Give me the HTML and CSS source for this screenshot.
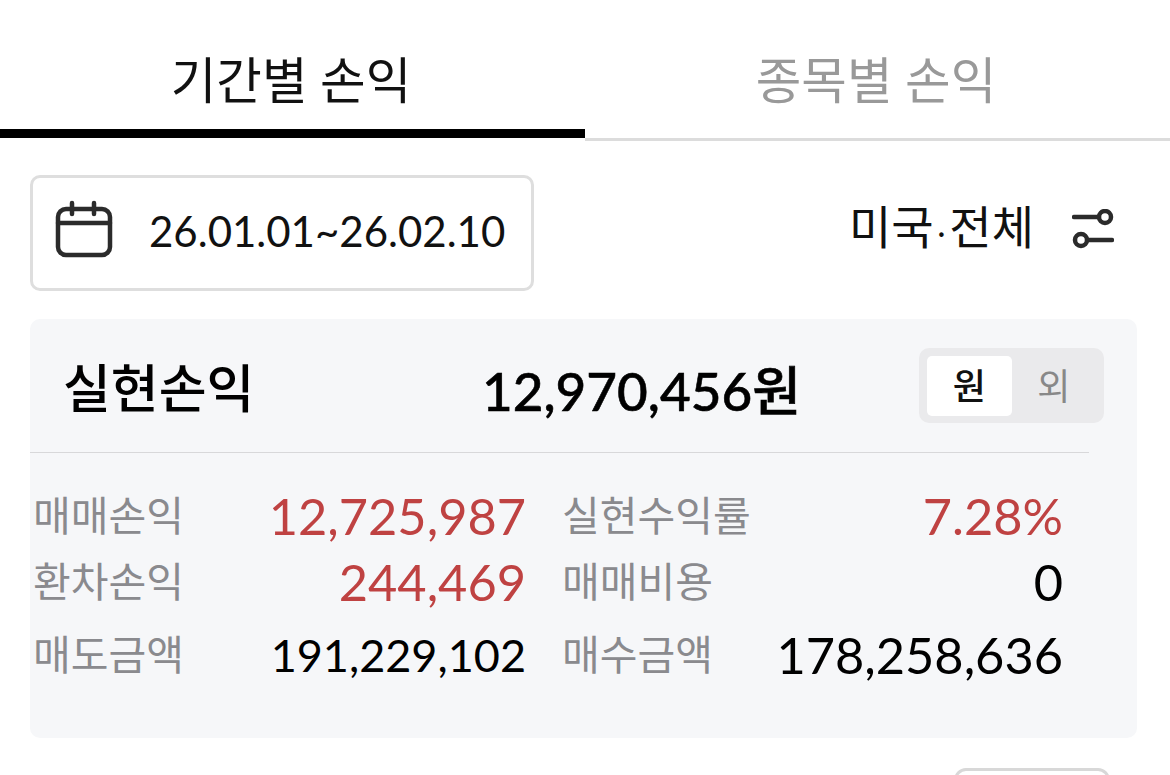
FILE: index.html
```html
<!DOCTYPE html>
<html lang="ko">

<head>
  <meta charset="UTF-8">
  <meta name="viewport" content="width=device-width, initial-scale=1.0">
  <title>기간별 손익</title>
  <link rel="stylesheet" href="styles.css">
</head>

<body>
  <div class="tabs">
    <div class="tab active">기간별 손익</div>
    <div class="tab">종목별 손익</div>
  </div>

  <div class="filter-row">
    <div class="date-box">
      <svg class="cal-icon" width="58" height="58" viewBox="0 0 58 58" fill="none" stroke="#2b2b2b" stroke-width="4.5" stroke-linecap="round">
        <rect x="3" y="9" width="52" height="46" rx="8" />
        <path d="M3 23H55" />
        <path d="M17 3V14M39 3V14" />
      </svg>
      <span class="date-text">26.01.01~26.02.10</span>
    </div>
    <div class="market">
      <span class="market-text">미국<span class="dot">·</span>전체</span>
      <svg class="filter-icon" width="42" height="40" viewBox="0 0 42 40" fill="none" stroke="#2b2b2b" stroke-width="4.5" stroke-linecap="round">
        <path d="M2 8H26" />
        <circle cx="33" cy="8" r="6" />
        <path d="M16 31H40" />
        <circle cx="9" cy="31" r="6" />
      </svg>
    </div>
  </div>

  <div class="card">
    <div class="card-head">
      <div class="card-title">실현손익</div>
      <div class="card-total">12,970,456원</div>
      <div class="toggle">
        <div class="toggle-btn on">원</div>
        <div class="toggle-btn">외</div>
      </div>
    </div>
    <div class="divider"></div>
    <div class="stats">
      <div class="label">매매손익</div>
      <div class="value red">12,725,987</div>
      <div class="label second">실현수익률</div>
      <div class="value red">7.28%</div>
      <div class="label">환차손익</div>
      <div class="value red">244,469</div>
      <div class="label second">매매비용</div>
      <div class="value">0</div>
      <div class="label">매도금액</div>
      <div class="value small">191,229,102</div>
      <div class="label second">매수금액</div>
      <div class="value">178,258,636</div>
    </div>
  </div>

  <div class="bottom-row">
    <div class="peek-btn"></div>
  </div>
</body>

</html>
```

FILE: styles.css
```css
html,
body {
  height: 775px;
  overflow: hidden;
}

body {
  margin: 0;
  background: white;
  color: #000;
  font-family: Lato, "Noto Sans CJK KR", sans-serif;
}

.tabs {
  display: flex;
  height: 141px;
}

.tab {
  flex: 1;
  height: 141px;
  box-sizing: border-box;
  padding: 46px 3px 0 0;
  border-bottom: 3px solid #dcdcdc;
  text-align: center;
  font-size: 49.5px;
  line-height: 68px;
  color: #999;
}

.tab.active {
  height: 138px;
  border-bottom: 9px solid #000;
  color: #111;
}

.filter-row {
  display: flex;
  justify-content: space-between;
  align-items: center;
  height: 116px;
  margin-top: 34px;
  padding: 0 56px 0 30px;
}

.date-box {
  display: flex;
  align-items: center;
  box-sizing: border-box;
  width: 504px;
  height: 116px;
  padding: 0 0 8px 22px;
  border: 3px solid #dedede;
  border-radius: 10px;
}

.cal-icon {
  flex: none;
}

.date-text {
  margin: 4px 0 0 36px;
  font-size: 42px;
  color: #111;
}

.market {
  display: flex;
  align-items: center;
  gap: 38px;
  margin-bottom: 8px;
}

.market-text {
  font-size: 46px;
  line-height: 60px;
  color: #111;
}

.dot {
  font-size: 30px;
  margin: 0 4px;
}

.card {
  box-sizing: border-box;
  height: 419px;
  margin: 28px 33px 0 30px;
  padding-top: 29px;
  background: #f6f7f9;
  border-radius: 10px;
}

.card-head {
  display: flex;
  align-items: center;
  height: 75px;
  padding: 0 33px;
}

.card-title {
  width: 419px;
  font-size: 52px;
  font-weight: 500;
}

.card-total {
  width: 437px;
  padding-top: 4px;
  font-size: 53px;
  font-weight: 500;
  -webkit-text-stroke: 0.6px #000;
}

.toggle {
  display: flex;
  box-sizing: border-box;
  width: 185px;
  height: 75px;
  padding: 8px;
  background: #eaeaec;
  border-radius: 10px;
}

.toggle-btn {
  width: 85px;
  height: 60px;
  text-align: center;
  font-size: 36px;
  line-height: 60px;
  color: #888;
  border-radius: 5px;
}

.toggle-btn.on {
  background: white;
  color: #111;
  font-weight: 500;
}

.divider {
  height: 1px;
  width: 1059px;
  margin-top: 29px;
  background: #d8d8da;
}

.stats {
  display: grid;
  grid-template-columns: 202px 291px 236px 301px;
  grid-template-rows: 66px 66px 80px;
  align-items: center;
  margin-top: 30px;
  padding-left: 3px;
}

.label {
  font-size: 41px;
  line-height: 60px;
  margin-top: -1px;
  color: #8a8a8e;
  white-space: nowrap;
}

.label.second {
  padding-left: 36px;
}

.value {
  text-align: right;
  font-size: 50.5px;
  line-height: 60px;
  white-space: nowrap;
}

.value.small {
  font-size: 45px;
}

.red {
  color: #bf4242;
}

.bottom-row {
  display: flex;
  justify-content: flex-end;
  height: 7px;
  overflow: hidden;
  margin-top: 30px;
  padding-right: 60px;
}

.peek-btn {
  box-sizing: border-box;
  flex: none;
  width: 156px;
  height: 60px;
  border: 3px solid #d8d8d8;
  border-radius: 12px;
}
```
